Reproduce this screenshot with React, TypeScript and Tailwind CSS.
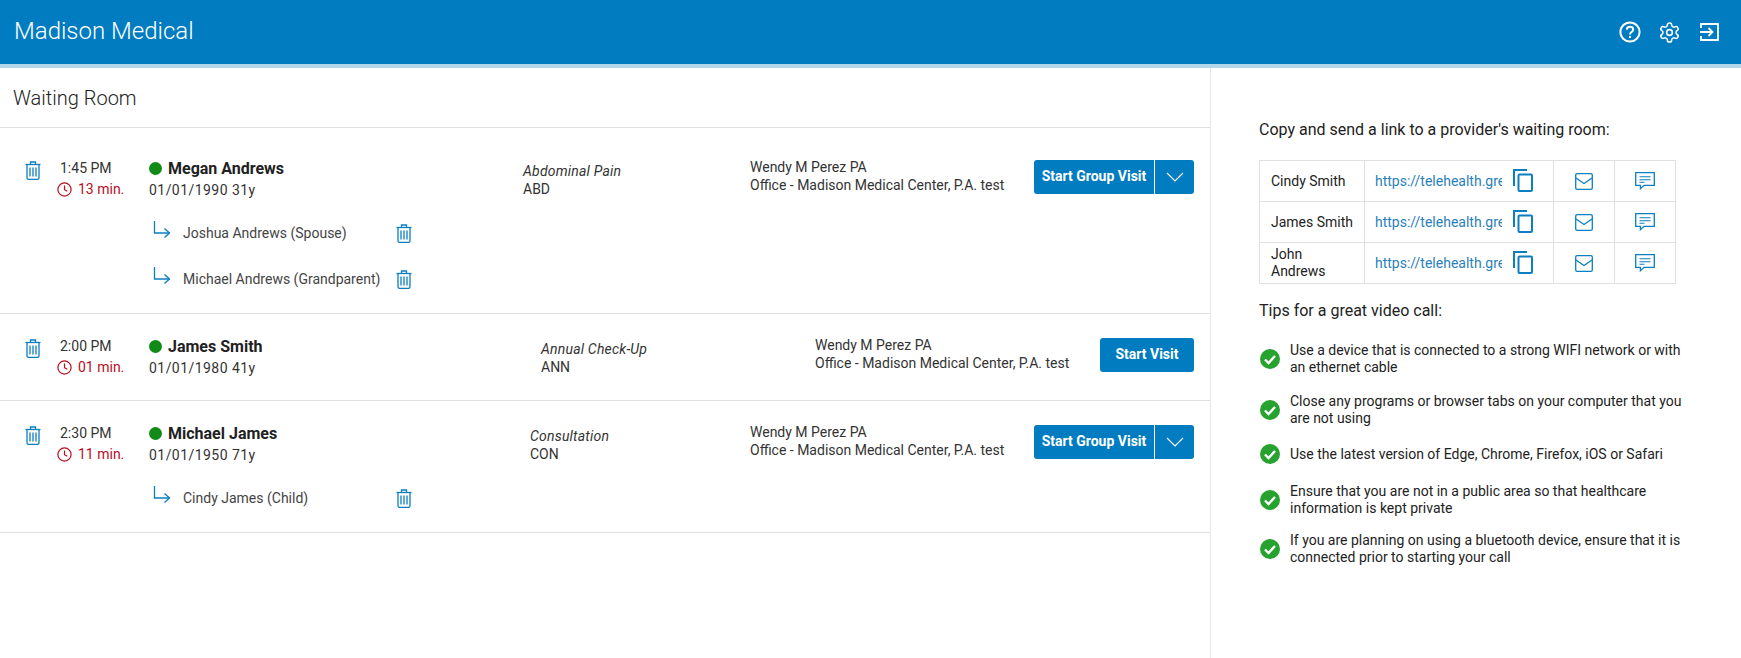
import React from 'react';

const Trash = () => (
  <svg width="16" height="19" viewBox="0 0 16 19" fill="none" stroke="#0d7fc1" strokeWidth="1.3" className="shrink-0">
    <path d="M0.500 3.500h15" />
    <path d="M5.500 3.500V1h5v2.500" />
    <path d="M2 3.500v13.200c0 1 .7 1.700 1.700 1.700h8.600c1 0 1.700-.7 1.700-1.700V3.500" />
    <path d="M5 6.500v9M8 6.500v9M11 6.500v9" />
  </svg>
);

const ClockIcon = () => (
  <svg width="15" height="15" viewBox="0 0 15 15" fill="none" stroke="#b80d1e" strokeWidth="1.2" className="shrink-0">
    <circle cx="7.500" cy="7.500" r="6.600" />
    <path d="M7.500 3.500v4.200l2.800 1.600" />
  </svg>
);

const SubArrow = () => (
  <svg width="18" height="17" viewBox="0 0 18 17" fill="none" stroke="#0d7fc1" strokeWidth="1.3" className="shrink-0">
    <path d="M1.500 0v12h15" />
    <path d="M11.500 7.500l5 4.500-5 4.500" />
  </svg>
);

const CopyIcon = () => (
  <svg width="20" height="23" viewBox="0 0 20 23" fill="none" stroke="#0d7fc1" strokeWidth="2" className="shrink-0">
    <path d="M1 17V1h13" />
    <rect x="5.500" y="5.500" width="13.500" height="16.500" rx="1" />
  </svg>
);

const MailIcon = () => (
  <svg width="18" height="17" viewBox="0 0 18 17" fill="none" stroke="#0d7fc1" strokeWidth="1.3" className="shrink-0">
    <rect x="0.700" y="0.700" width="16.600" height="15.600" rx="1.400" />
    <path d="M1 5l8 5.500L17 5" />
  </svg>
);

const ChatIcon = () => (
  <svg width="20" height="18" viewBox="0 0 20 18" fill="none" stroke="#0d7fc1" strokeWidth="1.3" className="shrink-0">
    <path d="M.7.7h18.600v12.600H9l-3.600 3.400v-3.400H.7z" />
    <path d="M4.500 4.700h11M4.500 7.700h11M4.500 10.200h5" strokeWidth="1.100" />
  </svg>
);

const CheckIcon = () => (
  <svg width="20" height="20" viewBox="0 0 20 20" className="shrink-0">
    <circle cx="10" cy="10" r="10" fill="#28a22f" />
    <path d="M5 10.500l3.500 3.500L15 7" fill="none" stroke="#fff" strokeWidth="2.400" />
  </svg>
);

const Chevron = () => (
  <svg width="18" height="10" viewBox="0 0 18 10" fill="none" stroke="#fff" strokeWidth="1.100">
    <path d="M1 1l8 8 8-8" />
  </svg>
);

const HelpIcon = () => (
  <svg width="22" height="22" viewBox="0 0 22 22" fill="none" stroke="#fff" strokeWidth="2">
    <circle cx="11" cy="11" r="9.600" />
    <path d="M7.800 8.600C7.900 6.700 9.300 5.800 11 5.800c1.800 0 3.200 1.100 3.200 2.800 0 2.500-3.200 2.400-3.200 4.900" />
    <path d="M11 15v2" />
  </svg>
);

const GearIcon = () => (
  <svg width="23" height="23" viewBox="0 0 24 24" fill="none" stroke="#fff" strokeWidth="1.600" strokeLinecap="round" strokeLinejoin="round" className="-ml-[1px] mr-[1px]">
    <path d="M12.220 2h-.44a2 2 0 0 0-2 2v.18a2 2 0 0 1-1 1.730l-.43.25a2 2 0 0 1-2 0l-.15-.08a2 2 0 0 0-2.730.73l-.22.38a2 2 0 0 0 .73 2.730l.15.1a2 2 0 0 1 1 1.720v.51a2 2 0 0 1-1 1.740l-.15.09a2 2 0 0 0-.73 2.730l.22.38a2 2 0 0 0 2.730.73l.15-.08a2 2 0 0 1 2 0l.43.25a2 2 0 0 1 1 1.730V20a2 2 0 0 0 2 2h.44a2 2 0 0 0 2-2v-.18a2 2 0 0 1 1-1.730l.43-.25a2 2 0 0 1 2 0l.15.08a2 2 0 0 0 2.730-.73l.22-.39a2 2 0 0 0-.73-2.730l-.15-.08a2 2 0 0 1-1-1.740v-.5a2 2 0 0 1 1-1.740l.15-.09a2 2 0 0 0 .73-2.730l-.22-.38a2 2 0 0 0-2.730-.73l-.15.08a2 2 0 0 1-2 0l-.43-.25a2 2 0 0 1-1-1.730V4a2 2 0 0 0-2-2z" />
    <circle cx="12" cy="12" r="3" />
  </svg>
);

const ExitIcon = () => (
  <svg width="19" height="18" viewBox="0 0 19 18" fill="none" stroke="#fff" strokeWidth="1.800">
    <path d="M1 5V1h17v16H1v-4" />
    <path d="M0 9h12M8.500 5l4 4-4 4" />
  </svg>
);

const Patient = ({
  time, wait, name, dob, reason, code, reasonClass, group, related, rowClass,
}: {
  time: string; wait: string; name: string; dob: string; reason: string; code: string;
  reasonClass: string; group?: boolean; related?: string[]; rowClass: string;
}) => (
  <div className={`border-b border-[#e0e0e0] pr-[16px] ${rowClass}`}>
    <div className="flex items-start">
      <div className="w-[60px] pl-[25px] pt-[3px]"><Trash /></div>
      <div className="w-[89px] text-[14px] leading-[21px]">
        <div className="text-[#333]">{time}</div>
        <div className="flex items-center gap-[6px] text-[#b80d1e] -ml-[3px]"><ClockIcon />{wait}</div>
      </div>
      <div className="flex-none w-[300px]">
        <div className="flex items-center gap-[6px] text-[16px] leading-[21px] font-bold text-[#212121]">
          <span className="w-[13px] h-[13px] rounded-full bg-[#118a18]" />
          {name}
        </div>
        <div className="text-[14px] leading-[21px] mt-[1px] text-[#333] tracking-[0.45px]">{dob}</div>
      </div>
      <div className={`text-[14px] leading-[18px] text-[#333] pt-[4px] ${reasonClass}`}>
        <div className="italic tracking-[0.2px]">{reason}</div>
        <div>{code}</div>
      </div>
      <div className="text-[14px] leading-[18px] text-[#333]">
        <div>Wendy M Perez PA</div>
        <div>Office - Madison Medical Center, P.A. test</div>
      </div>
      <div className="ml-auto mt-[2px] flex h-[34px] rounded-[3px] bg-[#017cc0] text-white text-[14px] font-bold">
        {group ? (
          <>
            <span className="w-[120px] flex items-center justify-center pb-[2px]">Start Group Visit</span>
            <span className="w-[40px] border-l border-white flex items-center justify-center"><Chevron /></span>
          </>
        ) : (
          <span className="w-[94px] flex items-center justify-center pb-[2px]">Start Visit</span>
        )}
      </div>
    </div>
    {related?.map((r, i) => (
      <div key={r} className={`flex items-center pl-[153px] text-[14px] leading-[20px] text-[#444] ${i === 0 ? 'mt-[22px]' : 'mt-[26px]'}`}>
        <span className="-mt-[7px]"><SubArrow /></span>
        <span className="ml-[12px] w-[213px]">{r}</span>
        <Trash />
      </div>
    ))}
  </div>
);

const LinkRow = ({ name }: { name: string }) => (
  <tr className="h-[41px]">
    <td className="border border-[#e0e0e0] pl-[11px] pr-[4px] text-[14px] leading-[17px] text-[#222] w-[105px]">{name}</td>
    <td className="border border-[#e0e0e0] pl-[10px] w-[189px]">
      <div className="flex items-center">
        <span className="w-[127px] overflow-hidden whitespace-nowrap text-[14px] text-[#2a7fba]">https://telehealth.gre</span>
        <span className="ml-[11px] -mt-[2px]"><CopyIcon /></span>
      </div>
    </td>
    <td className="border border-[#e0e0e0] w-[61px]"><div className="flex justify-center"><MailIcon /></div></td>
    <td className="border border-[#e0e0e0] w-[61px]"><div className="flex justify-center"><ChatIcon /></div></td>
  </tr>
);

const tips = [
  ['Use a device that is connected to a strong WIFI network or with an ethernet cable', 'mb-[17px]'],
  ['Close any programs or browser tabs on your computer that you are not using', 'mb-[17px]'],
  ['Use the latest version of Edge, Chrome, Firefox, iOS or Safari', 'mb-[19px]'],
  ['Ensure that you are not in a public area so that healthcare information is kept private', 'mb-[15px]'],
  ['If you are planning on using a bluetooth device, ensure that it is connected prior to starting your call', ''],
];

export default function App() {
  return (
    <div className="h-[658px] overflow-hidden bg-white font-['Roboto',sans-serif]">
      <header className="h-[68px] bg-[#017cc0] border-b-4 border-[#b3d7ea] flex items-center justify-between pl-[14px] pr-[22px]">
        <h1 className="text-[24px] font-light text-white pb-[2px]">Madison Medical</h1>
        <div className="flex items-center gap-[18px]">
          <HelpIcon />
          <GearIcon />
          <ExitIcon />
        </div>
      </header>
      <div className="flex h-[590px]">
        <main className="w-[1211px] border-r border-[#e8e8e8]">
          <div className="h-[60px] border-b border-[#e0e0e0] pl-[13px] pt-[17px] text-[20px] leading-[26px] font-light text-[#222]">Waiting Room</div>
          <Patient
            rowClass="h-[186px] pt-[30px]"
            time="1:45 PM" wait="13 min." name="Megan Andrews" dob="01/01/1990 31y"
            reason="Abdominal Pain" code="ABD" reasonClass="ml-[74px] w-[227px]" group
            related={['Joshua Andrews (Spouse)', 'Michael Andrews (Grandparent)']}
          />
          <Patient
            rowClass="h-[87px] pt-[22px]"
            time="2:00 PM" wait="01 min." name="James Smith" dob="01/01/1980 41y"
            reason="Annual Check-Up" code="ANN" reasonClass="ml-[92px] w-[274px]"
          />
          <Patient
            rowClass="h-[132px] pt-[22px]"
            time="2:30 PM" wait="11 min." name="Michael James" dob="01/01/1950 71y"
            reason="Consultation" code="CON" reasonClass="ml-[81px] w-[220px]" group
            related={['Cindy James (Child)']}
          />
        </main>
        <aside className="flex-1 pl-[48px] pt-[52px]">
          <p className="text-[16px] leading-[20px] text-[#222] mb-[20px]">Copy and send a link to a provider's waiting room:</p>
          <table className="border-collapse table-fixed w-[416px]">
            <tbody>
              <LinkRow name="Cindy Smith" />
              <LinkRow name="James Smith" />
              <LinkRow name="John Andrews" />
            </tbody>
          </table>
          <p className="text-[16px] leading-[20px] text-[#222] mt-[17px] mb-[21px]">Tips for a great video call:</p>
          <div className="w-[425px]">
            {tips.map(([text, mb]) => (
              <div key={text} className={`flex items-center gap-[10px] pl-[1px] text-[14px] leading-[17px] text-[#222] ${mb}`}>
                <CheckIcon />
                <span>{text}</span>
              </div>
            ))}
          </div>
        </aside>
      </div>
    </div>
  );
}
